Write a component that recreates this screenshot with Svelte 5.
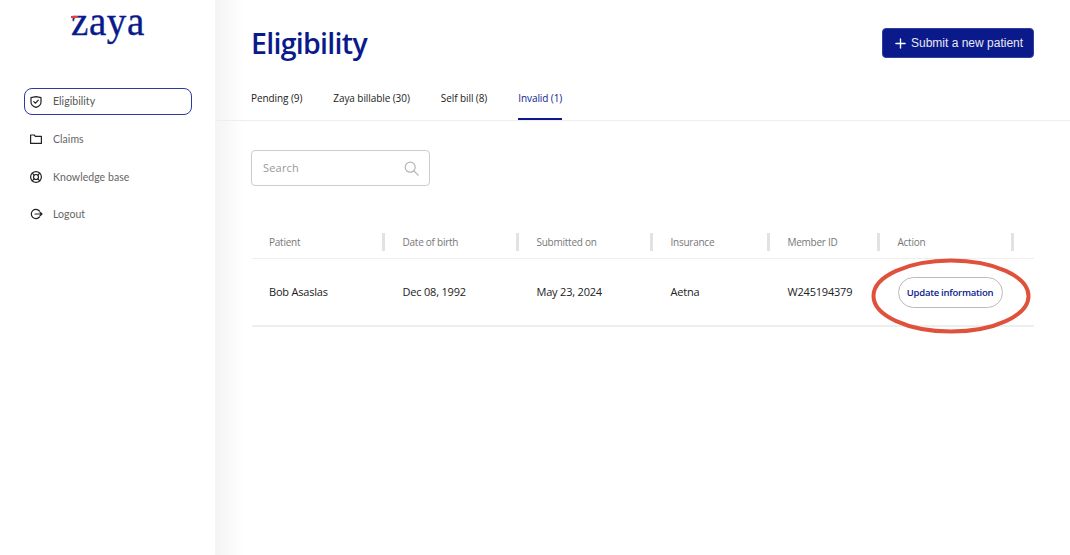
<script>
  const nav = [
    { label: 'Eligibility', icon: 'shield', active: true },
    { label: 'Claims', icon: 'folder' },
    { label: 'Knowledge base', icon: 'help' },
    { label: 'Logout', icon: 'logout' },
  ]

  const tabs = [
    { label: 'Pending (9)' },
    { label: 'Zaya billable (30)' },
    { label: 'Self bill (8)' },
    { label: 'Invalid (1)', active: true },
  ]

  const columns = ['Patient', 'Date of birth', 'Submitted on', 'Insurance', 'Member ID', 'Action']
  const row = ['Bob Asaslas', 'Dec 08, 1992', 'May 23, 2024', 'Aetna', 'W245194379']
</script>

<div class="page">
  <aside class="side">
    <div class="logo"><span class="dash"></span>zaya</div>
    <nav class="nav">
      {#each nav as item (item.label)}
        <div class="nav-item" class:active={item.active}>
          <svg width="14" height="14" viewBox="0 0 14 14" fill="none" stroke="#222" stroke-width="1.2" stroke-linecap="round" stroke-linejoin="round">
            {#if item.icon === 'shield'}
              <path d="M2 2.6 7 1.6l5 1v4.6c0 2.6-2.2 4.2-5 5.2-2.8-1-5-2.6-5-5.2z" />
              <path d="M4.8 6.6 6.5 8.2 9.3 5.2" />
            {:else if item.icon === 'folder'}
              <path d="M1.6 3h3.6l1.2 1.4h6v7H1.6z" />
            {:else if item.icon === 'help'}
              <circle cx="7" cy="7" r="5.4" />
              <circle cx="7" cy="7" r="2.5" />
              <path d="M3.2 3.2 5.2 5.2M10.8 3.2 8.8 5.2M3.2 10.8 5.2 8.8M10.8 10.8 8.8 8.8" />
            {:else}
              <path d="M10.4 4A4.6 4.6 0 1 0 10.4 10" />
              <path d="M6 7h7M11 5.2 13 7l-2 1.8" />
            {/if}
          </svg>
          <span>{item.label}</span>
        </div>
      {/each}
    </nav>
  </aside>

  <main class="main">
    <header class="head">
      <h1>Eligibility</h1>
      <button type="button" class="submit">
        <svg width="11" height="11" viewBox="0 0 12 12" stroke="#fff" stroke-width="1.5" stroke-linecap="round"><path d="M6 1v10M1 6h10" /></svg>
        Submit a new patient
      </button>
    </header>

    <div class="tabs">
      {#each tabs as tab (tab.label)}
        <div class="tab" class:active={tab.active}>{tab.label}</div>
      {/each}
    </div>

    <div class="search">
      <span>Search</span>
      <svg width="15" height="15" viewBox="0 0 15 15" fill="none" stroke="#b5b5b5" stroke-width="1.2" stroke-linecap="round"><circle cx="6.2" cy="6.2" r="5" /><path d="M10 10l4.2 4.2" /></svg>
    </div>

    <div class="table">
      <div class="tr th">
        {#each columns as col (col)}
          <div class="cell">{col}</div>
        {/each}
      </div>
      <div class="tr td">
        {#each row as value (value)}
          <div class="cell">{value}</div>
        {/each}
        <div class="cell">
          <button type="button" class="update">Update information</button>
          <svg class="ring" width="166" height="80" viewBox="0 0 166 80" fill="none">
            <ellipse cx="83" cy="40" rx="77.5" ry="35.5" stroke="#e0513b" stroke-width="4" />
          </svg>
        </div>
      </div>
    </div>
  </main>
</div>

<style>
  :global(body) { background: #fff; }

  .page {
    display: flex;
    width: 1070px;
    height: 555px;
    overflow: hidden;
    font-family: 'Open Sans', 'Noto Sans', sans-serif;
  }

  .side {
    width: 215px;
    flex: none;
    padding: 0 24px;
    box-sizing: border-box;
  }

  .logo {
    position: relative;
    width: 80px;
    margin: 0 0 0 47px;
    height: 88px;
    font-family: 'Liberation Serif', serif;
    font-size: 39px;
    line-height: 44px;
    letter-spacing: .6px;
    -webkit-text-stroke: .35px #0a1a8c;
    color: #0a1a8c;
  }
  .dash {
    position: absolute;
    left: 0;
    top: 16px;
    width: 7px;
    height: 2px;
    background: #e0413a;
  }

  .nav { display: flex; flex-direction: column; gap: 10.5px; width: 168px; }

  .nav-item {
    display: flex;
    align-items: center;
    gap: 10px;
    height: 27px;
    padding: 0 0 0 4px;
    font-family: 'Lato', sans-serif;
    font-size: 10.5px;
    letter-spacing: .05px;
    color: #666;
    box-sizing: border-box;
    border: 1px solid transparent;
    border-radius: 8px;
  }
  .nav-item.active { border-color: #2b3a9e; color: #555; }
  .nav-item.active span { padding-bottom: 2px; }

  .main {
    flex: 1;
    min-width: 0;
    background: linear-gradient(to right, #f4f4f4, #fff 30px);
  }

  .head {
    display: flex;
    align-items: flex-start;
    justify-content: space-between;
    height: 84px;
    padding: 0 36px;
  }

  h1 {
    margin: 23px 0 0;
    font-size: 28.5px;
    line-height: 40px;
    font-weight: 600;
    letter-spacing: -.7px;
    color: #0a1a8c;
  }

  .submit {
    display: flex;
    align-items: center;
    gap: 5px;
    width: 152px;
    height: 30px;
    margin-top: 28px;
    padding: 0 0 0 12px;
    background: #0a1a8a;
    color: #e8e8f6;
    border: 1px solid #2f3e9f;
    border-radius: 4px;
    font-family: 'Liberation Sans', sans-serif;
    font-size: 12px;
    white-space: nowrap;
  }

  .tabs {
    display: flex;
    gap: 31px;
    height: 36px;
    padding-left: 36px;
    border-bottom: 1px solid #eee;
  }

  .tab {
    height: 34px;
    font-size: 10px;
    line-height: 29px;
    font-weight: 500;
    color: #222;
    letter-spacing: -.08px;
    white-space: nowrap;
  }
  .tab.active { color: #0a1a8c; border-bottom: 2px solid #0a1a8c; }

  .search {
    display: flex;
    align-items: center;
    justify-content: space-between;
    width: 179px;
    height: 36px;
    margin: 29px 0 0 36px;
    padding: 0 10px 0 11px;
    box-sizing: border-box;
    border: 1px solid #ccc;
    border-radius: 4px;
    font-size: 11px;
    letter-spacing: .2px;
    color: #999;
  }
  .search span { padding-bottom: 2px; }

  .table { width: 782px; margin: 38px 0 0 37px; }

  .tr { display: grid; grid-template-columns: 133.5px 134px 134px 117px 110px 153.5px; }

  .th { height: 25px; padding-top: 9px; align-items: start; border-bottom: 1px solid #eee; font-size: 10px; letter-spacing: -.25px; color: #777; }
  .th .cell {
    display: flex;
    align-items: center;
    height: 18px;
    margin-right: 1px;
    padding-left: 17px;
    box-sizing: border-box;
    border-right: 3px solid #e2e2e2;
  }
  .th .cell:last-child { margin-right: 20px; }

  .td { height: 66px; align-items: center; border-bottom: 2px solid #eee; font-size: 11px; letter-spacing: -.2px; color: #222; }
  .td .cell { position: relative; padding-left: 17px; white-space: nowrap; }
  .td .cell:not(:last-child) { padding-bottom: 2px; }

  .update {
    display: block;
    width: 105px;
    height: 31px;
    padding: 0;
    background: #fff;
    border: 1px solid #bbb;
    border-radius: 16px;
    font-family: inherit;
    font-size: 9.5px;
    font-weight: 600;
    letter-spacing: -.25px;
    color: #0a1a8c;
    white-space: nowrap;
  }

  .ring { position: absolute; left: -12.5px; top: -20.5px; pointer-events: none; }
</style>
